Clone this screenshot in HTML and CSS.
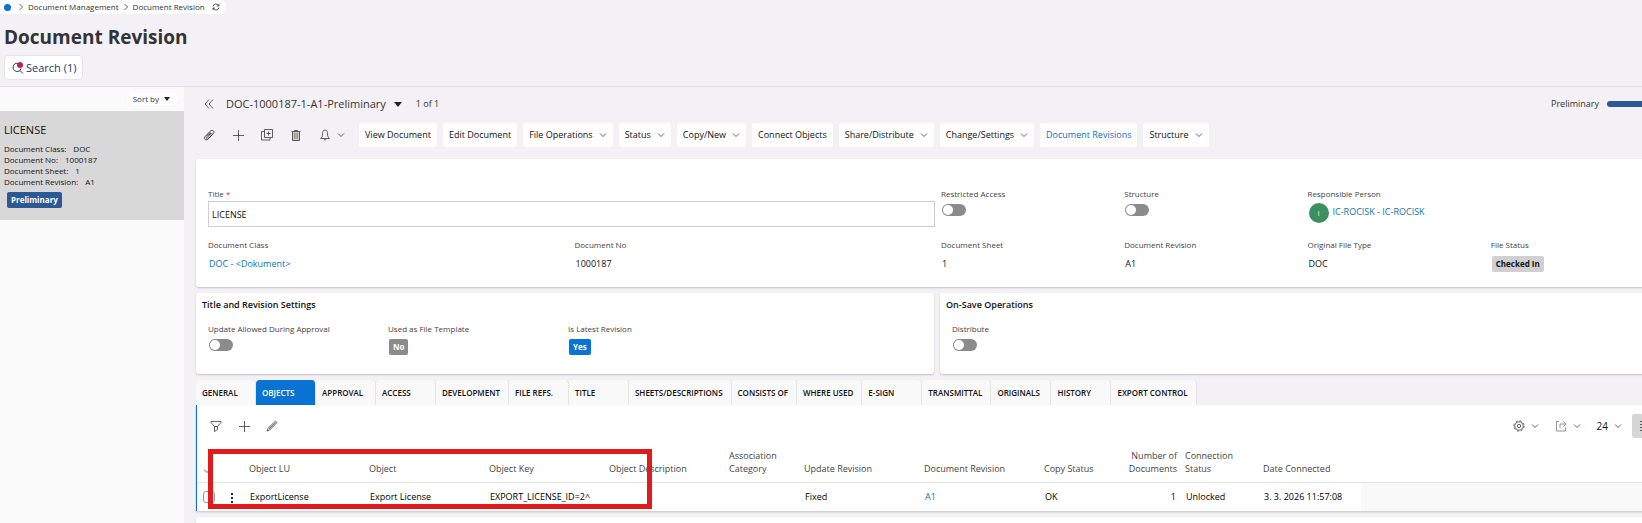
FILE: index.html
```html
<!DOCTYPE html>
<html lang="en">
<head>
<meta charset="utf-8">
<title>Document Revision</title>
<link rel="stylesheet" href="styles.css">
</head>
<body>
<svg class="defs" aria-hidden="true">
  <symbol id="chev" viewBox="0 0 8 8"><path d="M1 2.5 4 5.5 7 2.5"/></symbol>
  <symbol id="chev-r" viewBox="0 0 8 8"><path d="M2.5 1 5.5 4 2.5 7"/></symbol>
  <symbol id="plus" viewBox="0 0 12 12"><path d="M6.500 1v11M1 6.500h11"/></symbol>
</svg>
<header class="top">
  <nav class="crumbs" aria-label="Breadcrumb">
    <span class="home"></span>
    <svg class="ic-s"><use href="#chev-r"/></svg>
    <a href="#">Document Management</a>
    <svg class="ic-s"><use href="#chev-r"/></svg>
    <a href="#">Document Revision</a>
    <button class="bare refresh" aria-label="Refresh"><svg class="ic-s" viewBox="0 0 8 8"><path d="M1 3.5A3 3 0 0 1 6.8 3M7 .8V3H5M7 4.5A3 3 0 0 1 1.2 5M1 7.2V5H3"/></svg></button>
  </nav>
  <h1>Document Revision</h1>
  <button class="search"><svg class="ic-search" viewBox="0 0 12 12"><path d="M6 1.5A4 4 0 1 0 9 6.5M8 8.500 11 11.500"/><circle class="dot" cx="8" cy="3" r="3"/></svg>Search (1)</button>
</header>
<div class="body">
  <aside class="side">
    <div class="sort"><button class="sort-btn">Sort by <span class="tri small"></span></button></div>
    <article class="record">
      <h2>LICENSE</h2>
      <p>Document Class:<span>DOC</span></p>
      <p>Document No:<span>1000187</span></p>
      <p>Document Sheet:<span>1</span></p>
      <p>Document Revision:<span>A1</span></p>
      <span class="badge navy">Preliminary</span>
    </article>
  </aside>
  <main class="main">
    <div class="head">
      <button class="bare" aria-label="Collapse"><svg class="ic" viewBox="0 0 12 12"><path d="M6 1.500 2 6l4 4.500M10 1.500 6 6l4 4.500"/></svg></button>
      <button class="bare rec-title">DOC-1000187-1-A1-Preliminary<span class="tri"></span></button>
      <span class="count">1 of 1</span>
      <div class="state"><span>Preliminary</span><span class="bar"></span></div>
    </div>
    <div class="tools">
      <div class="icons">
        <button class="bare" aria-label="Attachments"><svg class="ic" viewBox="0 0 12 12"><path d="M3 7.5 7.5 2.800M4.500 9 9.500 3.800M5.500 6.500 8 4M9.500 5.500 5.500 9.800C4 11.300 2 11 1.500 10S1.500 8 2.500 7L7 2.300C8.300 1 10 1 10.700 2S11 4 10 5L5.500 9.500C4.500 10.300 3.500 10 3.200 9.500S3 8.500 3.700 7.800L7.500 4"/></svg></button>
        <button class="bare" aria-label="New"><svg class="ic"><use href="#plus"/></svg></button>
        <button class="bare" aria-label="Duplicate"><svg class="ic" viewBox="0 0 12 12"><path d="M3.500.5h8v8h-8zM3.500 2.500h-3v8.500h8.500V8.500M7.500 2.500v4M5.500 4.500h4"/></svg></button>
        <button class="bare" aria-label="Delete"><svg class="ic" viewBox="0 0 12 12"><path d="M2.500 3h7v8.500h-7z" class="can"/><path d="M1.500 2.500h9M4.500 2.500v-1h3v1M2.500 3v8.500h7V3"/><path class="slats" d="M4.500 4v6M6 4v6M7.500 4v6"/></svg></button>
        <button class="bare bell" aria-label="Notifications"><svg class="ic" viewBox="0 0 12 12"><path d="M6 1C4 1 3.500 3 3.500 5S3 8.300 1.500 9.500h9C9 8.300 8.500 7 8.500 5S8 1 6 1zM4.800 10.800h2.400"/></svg><svg class="ic-s"><use href="#chev"/></svg></button>
      </div>
      <button class="cmd">View Document</button>
      <button class="cmd">Edit Document</button>
      <button class="cmd">File Operations<svg class="ic-s"><use href="#chev"/></svg></button>
      <button class="cmd">Status<svg class="ic-s"><use href="#chev"/></svg></button>
      <button class="cmd">Copy/New<svg class="ic-s"><use href="#chev"/></svg></button>
      <button class="cmd">Connect Objects</button>
      <button class="cmd">Share/Distribute<svg class="ic-s"><use href="#chev"/></svg></button>
      <button class="cmd">Change/Settings<svg class="ic-s"><use href="#chev"/></svg></button>
      <a class="cmd link" href="#">Document Revisions</a>
      <button class="cmd">Structure<svg class="ic-s"><use href="#chev"/></svg></button>
    </div>
    <div class="content">
      <section class="card fields">
        <div class="field w4"><label for="title">Title <em>*</em></label><input id="title" class="text" type="text" value="LICENSE"></div>
        <div class="field"><label for="restricted">Restricted Access</label><input id="restricted" class="toggle" type="checkbox"></div>
        <div class="field"><label for="struct">Structure</label><input id="struct" class="toggle" type="checkbox"></div>
        <div class="field w2"><span class="label">Responsible Person</span><div class="person"><span class="avatar">I</span><a href="#">IC-ROCISK - IC-ROCISK</a></div></div>
        <div class="field w2"><span class="label">Document Class</span><a class="value" href="#">DOC - &lt;Dokument&gt;</a></div>
        <div class="field w2"><span class="label">Document No</span><span class="value">1000187</span></div>
        <div class="field"><span class="label">Document Sheet</span><span class="value">1</span></div>
        <div class="field"><span class="label">Document Revision</span><span class="value">A1</span></div>
        <div class="field"><span class="label">Original File Type</span><span class="value">DOC</span></div>
        <div class="field"><span class="label">File Status</span><span class="badge grey">Checked In</span></div>
      </section>
      <div class="pair">
        <section class="card settings">
          <h3>Title and Revision Settings</h3>
          <div class="row4">
            <div class="field"><label for="upd">Update Allowed During Approval</label><input id="upd" class="toggle" type="checkbox"></div>
            <div class="field"><span class="label">Used as File Template</span><span class="badge dark">No</span></div>
            <div class="field"><span class="label">Is Latest Revision</span><span class="badge blue">Yes</span></div>
          </div>
        </section>
        <section class="card settings">
          <h3>On-Save Operations</h3>
          <div class="row4">
            <div class="field"><label for="dist">Distribute</label><input id="dist" class="toggle" type="checkbox"></div>
          </div>
        </section>
      </div>
      <div class="tabs" role="tablist">
        <button role="tab">GENERAL</button><button role="tab" class="on" aria-selected="true">OBJECTS</button><button role="tab">APPROVAL</button><button role="tab">ACCESS</button><button role="tab">DEVELOPMENT</button><button role="tab">FILE REFS.</button><button role="tab">TITLE</button><button role="tab">SHEETS/DESCRIPTIONS</button><button role="tab">CONSISTS OF</button><button role="tab">WHERE USED</button><button role="tab">E-SIGN</button><button role="tab">TRANSMITTAL</button><button role="tab">ORIGINALS</button><button role="tab">HISTORY</button><button role="tab">EXPORT CONTROL</button>
      </div>
      <section class="panel">
        <div class="panel-tools">
          <button class="bare" aria-label="Filter"><svg class="ic" viewBox="0 0 12 12"><path d="M1 1.500h10v1L7.500 6.500v3l-3 2v-5L1 2.500zM4.500 6.500h3"/></svg></button>
          <button class="bare" aria-label="Add"><svg class="ic"><use href="#plus"/></svg></button>
          <button class="bare" aria-label="Edit"><svg class="ic" viewBox="0 0 12 12"><path d="M1 11l.8-2.500L9 1.500c.8-.8 2.300.7 1.500 1.500L3.500 10.200zM3 9l6.500-6.300"/></svg></button>
          <div class="right">
            <button class="bare" aria-label="Settings"><svg class="ic" viewBox="0 0 12 12"><circle cx="6" cy="6" r="4.200"/><circle cx="6" cy="6" r="1.700"/><circle cx="6" cy="6" r="5.200" stroke-dasharray="2 2.080"/></svg><svg class="ic-s"><use href="#chev"/></svg></button>
            <button class="bare" aria-label="Export"><svg class="ic light" viewBox="0 0 12 12"><path d="M4 1.500H1.500v9.500h9V7.500M5 8V4h5.500M8.500 1.500 11 4 8.500 6.500"/></svg><svg class="ic-s"><use href="#chev"/></svg></button>
            <button class="bare">24<svg class="ic-s"><use href="#chev"/></svg></button>
            <button class="bare view" aria-label="List view"><svg class="ic" viewBox="0 0 12 12"><path d="M1 1.500h10M1 4.500h10M1 7.500h10M1 10.500h10"/></svg></button>
          </div>
        </div>
        <table>
          <colgroup><col class="c-sel"><col class="c-menu"><col class="c-l"><col class="c-l"><col class="c-l"><col class="c-l"><col class="c-s"><col class="c-l"><col class="c-l"><col class="c-m"><col class="c-n"><col class="c-m"><col class="c-d"><col></colgroup>
          <thead><tr><th class="sel"><svg class="ic-s"><use href="#chev"/></svg></th><th></th><th>Object LU</th><th>Object</th><th>Object Key</th><th>Object Description</th><th>Association<br>Category</th><th>Update Revision</th><th>Document Revision</th><th>Copy Status</th><th class="num">Number of<br>Documents</th><th>Connection<br>Status</th><th>Date Connected</th><th></th></tr></thead>
          <tbody><tr><td class="sel"><input type="checkbox" class="pick" aria-label="Select row"></td><td><button class="bare" aria-label="Row menu"><svg class="ic-dots" viewBox="0 0 4 12"><path d="M1 2h2v2H1zM1 6h2v2H1zM1 10h2v2H1z"/></svg></button></td><td>ExportLicense</td><td>Export License</td><td>EXPORT_LICENSE_ID=2^</td><td></td><td></td><td>Fixed</td><td><a href="#">A1</a></td><td>OK</td><td class="num">1</td><td>Unlocked</td><td>3. 3. 2026 11:57:08</td><td class="rest"></td></tr></tbody>
        </table>
        <div class="mark"></div>
      </section>
      <section class="card next"></section>
    </div>
  </main>
</div>
</body>
</html>
```
FILE: styles.css
```css
* { box-sizing: border-box; }
body { margin: 0; height: 100vh; overflow: hidden; display: flex; flex-direction: column; background: #f3f1f5; color: #111; font: 9px/14px "Open Sans", "Noto Sans", sans-serif; }
h1, h2, h3, p { margin: 0; }
a { color: #0f75ad; text-decoration: none; }
button, input { font: inherit; color: inherit; margin: 0; }
svg { fill: none; stroke: #3a3a3a; display: block; flex: none; }
.defs { position: absolute; width: 0; height: 0; }
.ic { width: 12px; height: 12px; stroke-width: 0.8; }
.ic-s { width: 8px; height: 8px; stroke-width: 0.8; }
.light { stroke: #777; }
.bare { border: 0; background: none; padding: 0; display: flex; align-items: center; gap: 10px; }

.top { border-bottom: 1px solid #e2e1e4; padding-bottom: 6px; flex: none; display: flex; flex-direction: column; align-items: flex-start; }
.crumbs { display: flex; align-items: center; gap: 3px; height: 14px; padding: 0 6px 0 4px; background: #fff; border-radius: 0 6px 6px 0; font-size: 8px; line-height: 12px; }
.crumbs a { color: #333; }
.home { width: 7px; height: 7px; border-radius: 50%; background: #0972d3; margin-right: 3px; }
.refresh { margin-left: 4px; }
h1 { font-size: 19px; line-height: 28px; font-weight: 700; color: #333236; margin: 9px 0 4px 4px; }
.search { height: 25px; margin-left: 4px; padding: 0 6px 0 7px; display: flex; align-items: center; gap: 2px; background: #fff; border: 1px solid #e4e3e7; border-radius: 4px; font-size: 11px; color: #1c3766; }
.ic-search { width: 12px; height: 12px; stroke: #1c3766; }
.dot { fill: #b5274f; stroke: none; }

.body { flex: 1; display: flex; min-height: 0; }
.side { width: 184px; flex: none; background: #fafafa; }
.sort { height: 24px; padding: 6px 6px 0 0; display: flex; justify-content: flex-end; align-items: flex-start; }
.sort-btn { border: 0; background: #fff; border-radius: 6px; height: 12px; padding: 0 8px 0 6px; font-size: 8px; line-height: 12px; display: flex; align-items: center; gap: 5px; color: #333; }
.tri { border: 4px solid transparent; border-top: 5px solid #222; border-bottom: 0; }
.tri.small { border-width: 4px 3px 0; }
.record { background: #d8d8d8; padding: 11px 4px 12px; font-size: 8px; line-height: 11px; }
.record h2 { font-size: 11px; line-height: 16px; font-weight: 400; margin-bottom: 5px; }
.record p span { margin-left: 7px; }
.badge { display: inline-block; width: fit-content; height: 16px; line-height: 16px; padding: 0 4px; border-radius: 2px; font-size: 8px; font-weight: 700; }
.navy { background: #2c5895; color: #fff; margin: 5px 0 0 3px; }
.grey { background: #d0d0d0; color: #111; margin: 4px 0 0 1px; }
.dark { background: #8b8b8b; color: #fff; }
.blue { background: #0972d3; color: #fff; }

.main { flex: 1; min-width: 0; overflow: hidden; padding-left: 12px; display: flex; flex-direction: column; }
.head { flex: none; display: flex; align-items: center; height: 34px; padding-left: 7px; color: #333; }
.rec-title { font-size: 11px; margin-left: 11px; gap: 8px; }
.count { margin-left: 14px; }
.state { margin-left: auto; display: flex; align-items: center; gap: 8px; }
.bar { width: 35px; height: 6px; background: #2c5895; border-radius: 3px 0 0 3px; }
.tools { flex: none; display: flex; gap: 6px; padding: 2px 0 12px 7px; align-items: flex-start; }
.icons { display: flex; gap: 17px; height: 24px; align-items: center; margin-right: 8px; }
.bell { gap: 6px; }
.can { fill: #cdc8c5; stroke: none; }
.slats { stroke: #777; stroke-width: 0.6; }
.cmd { height: 24px; border: 0; border-radius: 3px; background: #fff; padding: 0 6px; display: flex; align-items: center; gap: 6px; white-space: nowrap; }
.link { color: #0f6fc0; }

.content { flex: none; margin-right: -36px; }
.card { background: #fff; border-radius: 3px; box-shadow: 0 1px 2px #0003; }
.fields { display: grid; grid-template-columns: repeat(8, 1fr); height: 128px; padding: 28px 4px 0 12px; grid-template-rows: 51px auto; }
.field { display: flex; flex-direction: column; align-items: flex-start; }
.field label, .field .label { font-size: 8px; line-height: 14px; color: #444; }
.field em { color: #e03030; font-style: normal; }
.w2 { grid-column: span 2; }
.w4 { grid-column: span 4; }
.text { width: calc(100% - 6px); height: 26px; border: 1px solid #cfcfcf; padding: 0 3px; background: #fff; outline: 0; }
.toggle { appearance: none; width: 24px; height: 12px; border-radius: 6px; background: #8b8b8b; display: flex; align-items: center; padding: 0 1px; margin: 3px 0 0 1px; }
.toggle::before { content: ""; width: 10px; height: 10px; border-radius: 50%; background: #fff; }
.person { display: flex; gap: 4px; align-items: center; margin-left: 1px; }
.avatar { width: 20px; height: 20px; border-radius: 50%; background: #3c8f60; color: #e6efb0; text-align: center; line-height: 20px; font-size: 8px; margin-top: 2px; }
.value { margin: 5px 0 0 1px; }
.pair { display: grid; grid-template-columns: 1fr 1fr; gap: 6px; margin: 6px 0; }
.settings { height: 81px; padding: 5px 6px; }
h3 { font-size: 9px; line-height: 14px; font-weight: 600; }
.row4 { display: grid; grid-template-columns: repeat(4, 1fr); padding: 10px 0 0 6px; }
.row4 .badge { margin: 3px 0 0 1px; }
.tabs { display: flex; height: 25px; }
.tabs button { min-width: 60px; border: 0; border-right: 1px solid #e4e4e4; border-radius: 4px 4px 0 0; background: #f9f9f9; padding: 0 8px 0 6px; text-align: left; font-size: 8px; font-weight: 600; white-space: nowrap; }
.tabs .on { background: #0972d3; color: #fff; }
.panel { position: relative; background: #fff; border-left: 1px solid #0972d3; box-shadow: 0 1px 2px #0003; }
.panel-tools { display: flex; align-items: center; height: 41px; padding: 0 36px 0 13px; gap: 16px; }
.right { margin-left: auto; display: flex; align-items: center; gap: 16px; font-size: 10px; }
.right .bare { gap: 6px; }
.right .view { width: 10px; height: 24px; background: #d6d6d6; border-radius: 3px 0 0 3px; padding-left: 7px; margin-left: -6px; overflow: hidden; }
table { width: 100%; border-collapse: collapse; table-layout: fixed; }
.c-sel { width: 28px; } .c-menu { width: 20px; } .c-l { width: 120px; } .c-s { width: 75px; } .c-m { width: 78px; } .c-n { width: 63px; } .c-d { width: 102px; }
th { height: 36px; padding: 0 4px 7px; vertical-align: bottom; text-align: left; font-weight: 400; line-height: 13px; color: #444; border-bottom: 1px solid #e2e2e2; }
td { height: 29px; padding: 0 5px; color: #000; white-space: nowrap; }
.num { text-align: right; }
.sel { padding-left: 6px; }
.rest { background: #f9f9f9; }
.pick { appearance: none; width: 12px; height: 12px; border: 1px solid #999; border-radius: 3px; display: block; }
.ic-dots { width: 4px; height: 12px; fill: #222; stroke: none; }
.mark { position: absolute; left: 11px; top: 44px; width: 444px; height: 60px; border: 5px solid #e01b1e; }
.next { height: 20px; margin-top: 6px; }
```
